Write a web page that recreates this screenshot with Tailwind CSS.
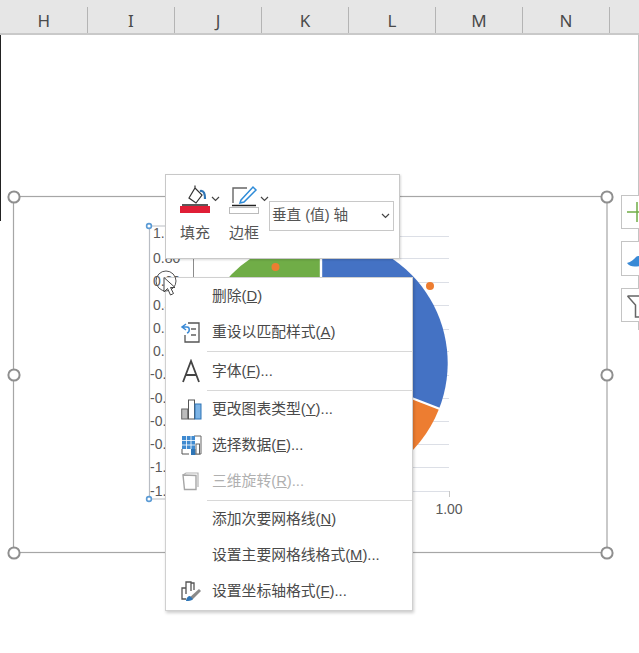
<!DOCTYPE html>
<html lang="zh-CN">
<head>
  <meta charset="UTF-8" />
  <title>Excel chart context menu</title>
  <script src="https://cdn.jsdelivr.net/npm/@tailwindcss/browser@4"></script>
</head>
<body class="bg-white">
  <div class="relative w-[639px] h-[653px] overflow-hidden bg-white font-['Liberation_Sans','Noto_Sans_CJK_SC',sans-serif] text-[#4a4a4a]">

    <!-- column headers -->
    <div class="flex h-[35px] bg-[#e6e6e6] border-b-2 border-[#c9c9c9] text-[17px] font-['Noto_Sans',sans-serif] text-[#4a4a4a]">
      <div class="w-[87.5px] h-[26px] self-end border-r border-[#b4b4b4] flex items-start justify-center pl-px pt-px">H</div>
      <div class="w-[87px] h-[26px] self-end border-r border-[#b4b4b4] flex items-start justify-center pl-px pt-px">I</div>
      <div class="w-[87px] h-[26px] self-end border-r border-[#b4b4b4] flex items-start justify-center pl-px pt-px">J</div>
      <div class="w-[87px] h-[26px] self-end border-r border-[#b4b4b4] flex items-start justify-center pl-px pt-px">K</div>
      <div class="w-[87px] h-[26px] self-end border-r border-[#b4b4b4] flex items-start justify-center pl-px pt-px">L</div>
      <div class="w-[87px] h-[26px] self-end border-r border-[#b4b4b4] flex items-start justify-center pl-px pt-px">M</div>
      <div class="w-[87px] h-[26px] self-end border-r border-[#b4b4b4] flex items-start justify-center pl-px pt-px">N</div>
    </div>

    <!-- sheet edges -->
    <div class="absolute left-0 top-[35px] w-px h-[186px] bg-[#222]"></div>
    <div class="absolute right-0 top-[35px] w-px h-[295px] bg-[#c4c4c4]"></div>

    <!-- chart -->
    <svg class="absolute left-0 top-0" width="639" height="653" viewBox="0 0 639 653">
      <rect x="13.5" y="196.5" width="593.5" height="356" fill="none" stroke="#a6a6a6" stroke-width="1.2" />
      <g stroke="#dcdfe6" stroke-width="1">
        <path d="M193 236.5H449M193 258.5H449M193 282.5H449M193 305.5H449M193 329.5H449M193 351.5H449M193 375.5H449M193 398.5H449M193 421.5H449M193 444.5H449M193 467.5H449M193 491.5H449" />
        <path d="M449.5 491V497" stroke="#c8c8c8" />
      </g>
      <path d="M193.5 258V491" stroke="#8c8c8c" />
      <path d="M321 363L321 237A126 126 0 0 0 195 363Z" fill="#70ad47" />
      <path d="M322 363L322 237A126 126 0 0 1 439 409Z" fill="#4472c4" />
      <path d="M321 363L439 409A126 126 0 0 1 321 489Z" fill="#ed7d31" />
      <path d="M321 363L321 236M321 363L440 409" stroke="#fff" stroke-width="2.4" fill="none" />
      <circle cx="275.5" cy="267" r="4" fill="#ed7d31" />
      <circle cx="430" cy="286" r="4" fill="#ed7d31" />
      <text x="449" y="514" text-anchor="middle" font-size="14" fill="#595959">1.00</text>

      <!-- selected axis -->
      <rect x="149" y="226" width="40" height="273" fill="#fff" stroke="none" />
      <path d="M149.5 226V499M149.5 226H192M149.5 499H192" stroke="#b9bdc4" stroke-width="1.2" fill="none" />
      <g font-size="14" fill="#595959">
        <text x="153" y="238">1.00</text>
        <text x="153" y="263">0.80</text>
        <text x="153" y="286">0.60</text>
        <text x="153" y="310">0.40</text>
        <text x="153" y="333">0.20</text>
        <text x="153" y="356">0.00</text>
        <text x="150" y="379">-0.20</text>
        <text x="150" y="403">-0.40</text>
        <text x="150" y="426">-0.60</text>
        <text x="150" y="449">-0.80</text>
        <text x="150" y="472">-1.00</text>
        <text x="150" y="496">-1.20</text>
      </g>
      <g fill="#fff" stroke="#5b9bd5" stroke-width="1.6">
        <circle cx="149" cy="226" r="2.4" />
        <circle cx="149" cy="499" r="2.4" />
      </g>

      <!-- frame handles -->
      <g fill="#fff" stroke="#8f8f8f" stroke-width="2">
        <circle cx="14" cy="197" r="5.6" />
        <circle cx="607" cy="197" r="5.6" />
        <circle cx="14" cy="375" r="5.6" />
        <circle cx="607" cy="375" r="5.6" />
        <circle cx="14" cy="553" r="5.6" />
        <circle cx="607" cy="553" r="5.6" />
      </g>
    </svg>

    <!-- chart side buttons -->
    <div class="absolute left-[621px] top-[195px] w-[18px] flex flex-col gap-[12px]">
      <div class="h-[34px] border border-r-0 border-[#c4c4c4] bg-white overflow-hidden">
        <svg width="18" height="32" viewBox="0 0 18 32"><path d="M5 16H17M15 6V26" stroke="#70ad47" stroke-width="1.5" fill="none" /></svg>
      </div>
      <div class="h-[35px] border border-r-0 border-[#c4c4c4] bg-white overflow-hidden">
        <svg width="18" height="33" viewBox="0 0 18 33"><path d="M5 21C9 20 12 17 14 15C15 14 16 14 18 14V24C12 25 8 25 5 21Z" fill="#3a8ad6" /></svg>
      </div>
      <div class="h-[34px] border border-r-0 border-[#c4c4c4] bg-white overflow-hidden">
        <svg width="18" height="32" viewBox="0 0 18 32"><path d="M5.500 7H18M5.500 7L13.500 16V28H18" stroke="#666" stroke-width="1.5" fill="none" /></svg>
      </div>
    </div>

    <!-- mini toolbar -->
    <div class="absolute left-[165px] top-[174px] w-[235px] h-[85px] bg-white border border-[#c8c8c8] shadow-[1px_1px_2px_rgba(0,0,0,0.15)] flex pl-[14px] pt-[8px]">
      <div class="w-[49px] flex flex-col items-start">
        <div class="flex items-center h-[32px]">
          <svg width="30" height="31" viewBox="0 0 30 31">
            <path d="M9 14L15 4L22 11L16 19Z M15 4V1.500" fill="#fff" stroke="#333" stroke-width="1.2" />
            <path d="M20 7C24 6 25 10 25 15" fill="none" stroke="#2e75b6" stroke-width="2.200" />
            <path d="M2 21H28" stroke="#222" stroke-width="1.5" />
            <rect x="0" y="22" width="30" height="7" fill="#e01e36" />
          </svg>
          <svg class="ml-px" width="9" height="6" viewBox="0 0 9 6"><path d="M1 1L4.500 4.500L8 1" fill="none" stroke="#444" stroke-width="1.2" /></svg>
        </div>
        <div class="mt-[9px] w-[30px] flex justify-center text-[15px] leading-[18px] whitespace-nowrap text-[#555]">填充</div>
      </div>
      <div class="w-[40px] flex flex-col items-start">
        <div class="flex items-center h-[32px]">
          <svg width="30" height="31" viewBox="0 0 30 31">
            <path d="M4 19V4H18" fill="none" stroke="#666" stroke-width="1.4" />
            <path d="M12 16L24 3L27 6L15 18L11 19Z" fill="#fff" stroke="#2e8bd8" stroke-width="1.5" />
            <path d="M3 21.500H27" stroke="#222" stroke-width="1.5" />
            <rect x="0.500" y="23.500" width="29" height="6" fill="#fff" stroke="#bbb" />
          </svg>
          <svg class="ml-px" width="9" height="6" viewBox="0 0 9 6"><path d="M1 1L4.500 4.500L8 1" fill="none" stroke="#444" stroke-width="1.2" /></svg>
        </div>
        <div class="mt-[9px] w-[30px] flex justify-center text-[15px] leading-[18px] whitespace-nowrap text-[#555]">边框</div>
      </div>
      <div class="mt-[18px] w-[125px] h-[30px] border border-[#c8c8c8] flex items-center justify-between pl-[2px] pr-[3px] text-[14.6px] text-[#555] whitespace-nowrap">
        <span>垂直 (值) 轴</span>
        <svg width="9" height="6" viewBox="0 0 9 6"><path d="M1 1L4.500 4.500L8 1" fill="none" stroke="#444" stroke-width="1.2" /></svg>
      </div>
    </div>

    <!-- context menu -->
    <div class="absolute left-[165px] top-[277px] w-[248px] h-[334px] bg-white border border-[#d0d0d0] shadow-[1px_2px_3px_rgba(0,0,0,0.2)] text-[14.8px] whitespace-nowrap">
      <div class="h-[36px] flex items-center">
        <div class="w-[46px]"></div><span>删除(<u>D</u>)</span>
      </div>
      <div class="h-[36px] flex items-center">
        <div class="w-[46px] flex justify-center pl-[4px]">
          <svg width="22" height="22" viewBox="0 0 22 22">
            <path d="M8 2H19V21H5V14" fill="none" stroke="#555" stroke-width="1.300" />
            <path d="M11 8H16M11 14H16" stroke="#888" stroke-width="2" />
            <path d="M6 3L2 6L6 9M2 6H7C10 6 10 11 7 12" fill="none" stroke="#3a8ad6" stroke-width="1.500" />
          </svg>
        </div>
        <span>重设以匹配样式(<u>A</u>)</span>
      </div>
      <div class="h-[3px] ml-[41px] flex items-center"><div class="h-px w-full bg-[#d8d8d8]"></div></div>
      <div class="h-[36px] flex items-center">
        <div class="w-[46px] flex justify-center pl-[4px]">
          <svg width="20" height="24" viewBox="0 0 20 24"><path d="M2 23L10 2L18 23M5 16H15" fill="none" stroke="#444" stroke-width="1.800" /></svg>
        </div>
        <span>字体(<u>F</u>)...</span>
      </div>
      <div class="h-[2px] ml-[41px] flex items-center"><div class="h-px w-full bg-[#d8d8d8]"></div></div>
      <div class="h-[36px] flex items-center">
        <div class="w-[46px] flex justify-center pl-[4px]">
          <svg width="21" height="21" viewBox="0 0 21 21">
            <rect x="0.700" y="10" width="6" height="10" fill="#bdbdbd" stroke="#666" />
            <rect x="7.500" y="1" width="6" height="19" fill="#fff" stroke="#555" />
            <rect x="14" y="5" width="6" height="15" fill="#7db4e6" stroke="#2e75b6" />
          </svg>
        </div>
        <span>更改图表类型(<u>Y</u>)...</span>
      </div>
      <div class="h-[36px] flex items-center">
        <div class="w-[46px] flex justify-center pl-[4px]">
          <svg width="21" height="21" viewBox="0 0 21 21">
            <path d="M13 1H20V19H12" fill="none" stroke="#666" />
            <rect x="1" y="1" width="13" height="13" fill="#3f8ad0" />
            <path d="M5.500 1V14M10 1V14M1 5.500H14M1 10H14" stroke="#fff" stroke-width="0.800" />
            <path d="M1 14V19H8" fill="none" stroke="#555" />
            <rect x="10" y="14" width="4.500" height="6" fill="#2e75b6" />
            <rect x="15" y="9" width="3.500" height="10" fill="#fff" stroke="#666" />
          </svg>
        </div>
        <span>选择数据(<u>E</u>)...</span>
      </div>
      <div class="h-[36px] flex items-center text-[#b0b0b0]">
        <div class="w-[46px] flex justify-center pl-[4px]">
          <svg width="20" height="20" viewBox="0 0 20 20">
            <path d="M2 4L5 2H17V16" fill="none" stroke="#b4b4b4" stroke-width="1.200" />
            <path d="M2 4L15 4.500V18.500L3.500 18.500Z" fill="#fff" stroke="#a6a6a6" stroke-width="1.400" />
          </svg>
        </div>
        <span>三维旋转(<u>R</u>)...</span>
      </div>
      <div class="h-[2px] ml-[41px] flex items-center"><div class="h-px w-full bg-[#d8d8d8]"></div></div>
      <div class="h-[36px] flex items-center">
        <div class="w-[46px]"></div><span>添加次要网格线(<u>N</u>)</span>
      </div>
      <div class="h-[36px] flex items-center">
        <div class="w-[46px]"></div><span>设置主要网格线格式(<u>M</u>)...</span>
      </div>
      <div class="h-[36px] flex items-center">
        <div class="w-[46px] flex justify-center pl-[4px]">
          <svg width="22" height="22" viewBox="0 0 22 22">
            <path d="M2 15V8H6V14M6 8V2H11V11M11 3H14V10" fill="none" stroke="#555" stroke-width="1.300" />
            <path d="M2 15V19H6" fill="none" stroke="#555" stroke-width="1.300" />
            <path d="M9 18L19 9L21 11L12 20Z" fill="#8a8a8a" />
            <path d="M6 21C6 18 8 16 10 16L13 19C11 21 9 21 6 21Z" fill="#2e75b6" />
          </svg>
        </div>
        <span>设置坐标轴格式(<u>F</u>)...</span>
      </div>
    </div>

    <!-- mouse pointer with click ring -->
    <svg class="absolute left-[154px] top-[268px]" width="26" height="30" viewBox="0 0 26 30">
      <circle cx="12" cy="13" r="10" fill="none" stroke="#555" stroke-width="1" />
      <path d="M10 9.500V24L13.500 20.500L16.500 27L19.500 25.500L16.500 19.500H21Z" fill="#fff" stroke="#444" stroke-width="1" />
    </svg>
  </div>
</body>
</html>
